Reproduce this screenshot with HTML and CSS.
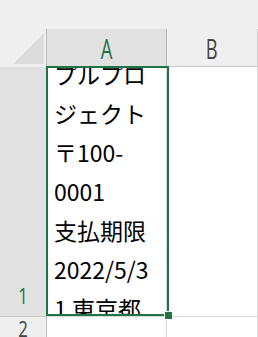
FILE: index.html
```html
<!DOCTYPE html>
<html lang="ja">
<head>
<meta charset="utf-8">
<link rel="stylesheet" href="styles.css">
</head>
<body>
<div class="sheet">
  <div class="topband"></div>
  <div class="grid">
    <div class="corner"><div class="tri"></div></div>
    <div class="colhead sel"><span class="hl">A</span></div>
    <div class="colhead"><span class="hl">B</span></div>

    <div class="rowhead sel"><span class="rn">1</span></div>
    <div class="cell a1">
      <div class="txt">
        <div class="ln">プルプロ</div>
        <div class="ln">ジェクト</div>
        <div class="ln">〒100-</div>
        <div class="ln">0001</div>
        <div class="ln">支払期限</div>
        <div class="ln">2022/5/3</div>
        <div class="ln">1 東京都</div>
      </div>
    </div>
    <div class="cell b1"></div>

    <div class="rowhead r2"><span class="rn">2</span></div>
    <div class="cell a2"></div>
    <div class="cell b2"></div>
  </div>
  <div class="selbox"><div class="handle"></div></div>
</div>
</body>
</html>
```
FILE: styles.css
```css
html, body {
  margin: 0;
  padding: 0;
  background: #ffffff;
}
.sheet {
  position: relative;
  width: 258px;
  height: 337px;
  overflow: hidden;
  background: #ffffff;
}
.topband {
  height: 29px;
  background: #efefef;
}
.grid {
  display: grid;
  grid-template-columns: 47px 120px 1fr;
  grid-template-rows: 38px 250px 40px;
}
.corner {
  background: #efefef;
  border-right: 1px solid #bcbcbc;
  position: relative;
  box-sizing: border-box;
}
.tri {
  position: absolute;
  left: 13px;
  top: 4px;
  width: 31px;
  height: 31px;
  background: #dcdcdc;
  clip-path: polygon(100% 0, 100% 100%, 0 100%);
}
.colhead {
  background: #efefef;
  border-bottom: 1px solid #c8c8c8;
  border-right: 1px solid #d0d0d0;
  box-sizing: border-box;
  display: flex;
  align-items: center;
  justify-content: center;
  font-family: "Open Sans", "Noto Sans", sans-serif;
  font-size: 27px;
  color: #444444;
}
.colhead.sel {
  background: #e1e1e1;
  border-right: 1px solid #b5b5b5;
  color: #217346;
}
.hl {
  display: inline-block;
  transform: scaleX(0.68);
  line-height: 1;
  margin-top: 2px;
}
.rowhead {
  background: #efefef;
  border-right: 1px solid #bcbcbc;
  box-sizing: border-box;
  display: flex;
  align-items: flex-end;
  justify-content: center;
  font-family: "Open Sans", "Noto Sans", sans-serif;
  font-size: 21px;
  color: #444444;
}
.rowhead.sel {
  background: #e1e1e1;
  color: #217346;
  border-bottom: 1px solid #c8c8c8;
}
.rowhead.sel .rn {
  margin-bottom: 9px;
}
.rowhead.r2 {
  align-items: flex-start;
}
.r2 .rn {
  margin-top: 2px;
}
.rn {
  display: inline-block;
  transform: scaleX(0.8);
  line-height: 1;
}
.cell {
  background: #ffffff;
  box-sizing: border-box;
  border-right: 1px solid #d9d9d9;
  border-bottom: 1px solid #d9d9d9;
}
.a1 {
  overflow: hidden;
}
.txt {
  margin-top: -12px;
  padding-left: 7px;
  font-family: "Noto Sans CJK JP", sans-serif;
  font-size: 23px;
  line-height: 39px;
  color: #000000;
  white-space: nowrap;
}
.selbox {
  position: absolute;
  left: 46px;
  top: 66px;
  width: 123px;
  height: 250px;
  box-sizing: border-box;
  border: 2px solid #217346;
}
.handle {
  position: absolute;
  right: -5px;
  bottom: -5px;
  width: 7px;
  height: 7px;
  background: #217346;
  box-shadow: 0 0 0 1px #ffffff;
}
```
